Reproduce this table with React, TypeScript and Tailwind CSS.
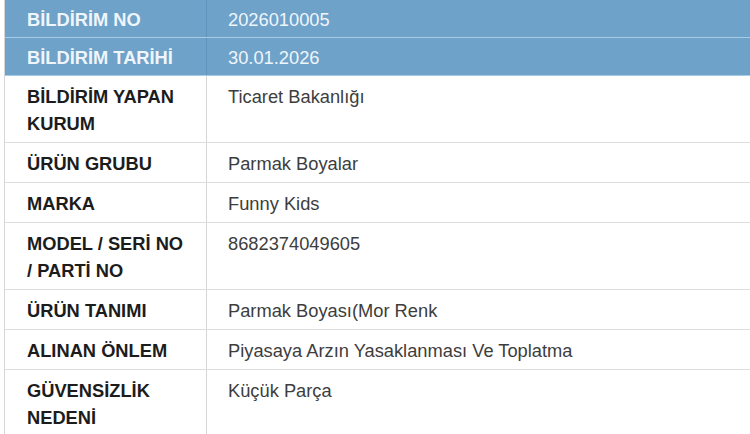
const rows = [
  { label: 'BİLDİRİM NO', value: '2026010005', head: true },
  { label: 'BİLDİRİM TARİHİ', value: '30.01.2026', head: true },
  { label: 'BİLDİRİM YAPAN KURUM', value: 'Ticaret Bakanlığı' },
  { label: 'ÜRÜN GRUBU', value: 'Parmak Boyalar' },
  { label: 'MARKA', value: 'Funny Kids' },
  { label: 'MODEL / SERİ NO / PARTİ NO', value: '8682374049605' },
  { label: 'ÜRÜN TANIMI', value: 'Parmak Boyası(Mor Renk' },
  { label: 'ALINAN ÖNLEM', value: 'Piyasaya Arzın Yasaklanması Ve Toplatma' },
  { label: 'GÜVENSİZLİK NEDENİ', value: 'Küçük Parça' },
];

const App = () => {
  return <div className="w-[750px] h-[434px] overflow-hidden bg-white font-['Liberation_Sans',Arial,sans-serif] text-[18.3px] leading-[27px]">
    <div className="ml-[4px] w-[800px] border-l border-[#d6d6d6]">
      {rows.map(row => <div key={row.label} className={`flex border-b ${row.head ? 'bg-[#6ea2c9] border-[#a6cbe6] text-[#eef5fb]' : 'bg-white border-[#dedede]'}`}>
        <div className={`w-[202px] shrink-0 pl-[22px] pr-4 font-bold border-r ${row.head ? 'pt-[6px] pb-[4px] border-[#5f93bb]' : 'pt-[7px] pb-[5px] border-[#d6d6d6] text-[#1c1c1c]'}`}>
          {row.label}
        </div>
        <div className={`flex-1 pl-[21px] ${row.head ? 'pt-[6px] pb-[4px]' : 'pt-[7px] pb-[5px] text-[#3d3d3d]'}`}>
          {row.value}
        </div>
      </div>)}
    </div>
  </div>;
};

export default App;
